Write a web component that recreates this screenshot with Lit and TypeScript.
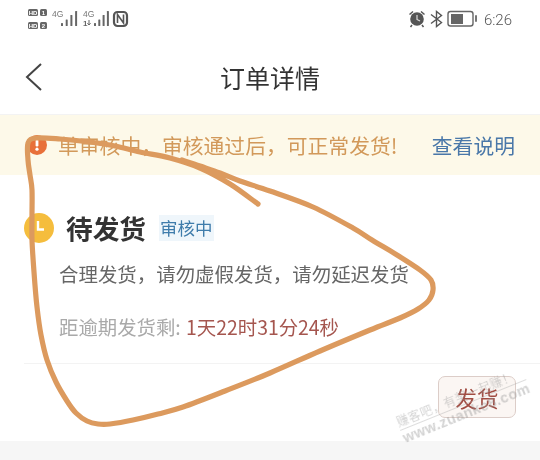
import { LitElement, html, css, svg } from "lit";
import { customElement } from "lit/decorators.js";

const bars = (x: number, step: number) => svg`
  <rect x="${x}" y="23" width="2" height="3" rx=".5"/>
  <rect x="${x + step}" y="19.5" width="2" height="6.5" rx=".5"/>
  <rect x="${x + step * 2}" y="15" width="2" height="11" rx=".5"/>
  <rect x="${x + step * 3}" y="11" width="2" height="15" rx=".5"/>`;

const inkPoints: [number, number][] = [
  [258, 204], [230, 184], [200, 168], [170, 158], [140, 152], [115, 146], [90, 142], [60, 139], [36, 138],
  [28, 143], [28, 160], [30, 175], [32, 190], [32, 215], [32, 240], [34, 272], [37, 307], [41, 335], [47, 360],
  [56, 382], [67, 401], [76, 413], [87, 421], [98, 424], [110, 424], [133, 420], [158, 414], [183, 407],
  [225, 391], [270, 373], [320, 351], [370, 330], [400, 318], [418, 309], [429, 300], [433, 290], [431, 280],
  [420, 270], [397, 255], [372, 240], [353, 228], [313, 207], [270, 191], [240, 181], [220, 173], [200, 166], [182, 160],
];

function smooth(p: [number, number][]): string {
  let d = `M${p[0][0]} ${p[0][1]}`;
  for (let i = 0; i < p.length - 1; i++) {
    const a = p[Math.max(i - 1, 0)], b = p[i], c = p[i + 1], e = p[Math.min(i + 2, p.length - 1)];
    const c1x = b[0] + (c[0] - a[0]) / 6, c1y = b[1] + (c[1] - a[1]) / 6;
    const c2x = c[0] - (e[0] - b[0]) / 6, c2y = c[1] - (e[1] - b[1]) / 6;
    d += `C${c1x.toFixed(1)} ${c1y.toFixed(1)} ${c2x.toFixed(1)} ${c2y.toFixed(1)} ${c[0]} ${c[1]}`;
  }
  return d;
}

@customElement("app-root")
export class AppRoot extends LitElement {
  static styles = css`
    :host {
      display: block;
      position: relative;
      width: 540px;
      height: 460px;
      overflow: hidden;
      background: #fff;
      font-family: "Noto Sans CJK SC", "Noto Sans", sans-serif;
    }
    .page { display: flex; flex-direction: column; height: 460px; filter: blur(0.35px); }
    .status { height: 36px; flex: none; display: flex; justify-content: space-between; align-items: flex-start; }
    .status svg { display: block; }
    .status-right { display: flex; align-items: flex-start; padding-right: 28px; gap: 7px; }
    .time { font-family: Roboto, sans-serif; font-weight: 300; font-size: 15px; line-height: 20px; margin-top: 10px; color: #555; }
    .nav {
      height: 78px; flex: none; position: relative; display: flex; align-items: center; justify-content: center;
      border-bottom: 1px solid #f3f3f3; box-sizing: content-box;
    }
    .nav h1 { margin: 3px 0 0; font-size: 25px; font-weight: 400; color: #333; line-height: 36px; }
    .back { position: absolute; left: 24px; top: 26px; }
    .banner {
      height: 60px; flex: none; background: #fdf9e9; display: flex; align-items: center;
      padding: 0 25px 0 27px; gap: 11px;
    }
    .banner .msg { flex: 1; font-size: 20.8px; color: #d2995a; white-space: nowrap; line-height: 60px; }
    .banner a { font-size: 20.8px; color: #4a78a9; white-space: nowrap; }
    .card { flex: none; height: 189px; padding-top: 35px; margin-left: 24px; border-bottom: 1px solid #f3f3f3; box-sizing: border-box; }
    .head { display: flex; align-items: center; height: 36px; }
    .head h2 { margin: 0 13px 0 12px; font-size: 26.7px; font-weight: 700; color: #333; line-height: 36px; }
    .clock { display: block; }
    .tag { background: #eff6fb; color: #3f7cab; font-size: 17.5px; line-height: 26px; padding: 0 1px; }
    .rule { margin: 14px 0 0 35px; font-size: 19.45px; line-height: 28px; color: #666; white-space: nowrap; }
    .remain { margin: 25px 0 0 35px; font-size: 19.4px; line-height: 28px; color: #a9a9a9; white-space: nowrap; }
    .remain b { font-weight: 400; color: #a5564f; margin-left: 1px; }
    .actions { flex: none; height: 77px; display: flex; justify-content: flex-end; align-items: flex-start; padding: 12px 24px 0 0; box-sizing: border-box; }
    .btn {
      width: 78px; height: 42px; box-sizing: border-box; border: 1px solid #dccdc8; border-radius: 7px;
      background: #fbf6f3; color: #a14c42; font-size: 21.5px; display: flex; align-items: center; justify-content: center;
    }
    .foot { flex: 1; background: #f6f6f6; }
    .mark {
      position: absolute; left: 400px; top: 413px; transform: rotate(-22deg); transform-origin: 0 50%;
      color: rgba(150, 150, 150, 0.42); font-size: 12px; line-height: 17px; white-space: nowrap;
      filter: blur(0.4px);
    }
    .mark .a { border-bottom: 1px solid rgba(170, 170, 170, 0.4); letter-spacing: .6px; display: block; }
    .mark .b { font-family: "Liberation Sans", sans-serif; font-weight: 700; font-size: 14.5px; letter-spacing: .5px; display: block; line-height: 16px; }
    .ink { position: absolute; left: 0; top: 0; pointer-events: none; }
  `;

  render() {
    return html`
      <div class="page">
        <div class="status">
          <svg width="140" height="36" viewBox="0 0 140 36" fill="#666">
            <rect x="28" y="9" width="10" height="7" rx="1.5"/>
            <text x="33" y="14.6" text-anchor="middle" font-size="6" font-weight="700" fill="#fff" font-family="Liberation Sans">HD</text>
            <rect x="40" y="9" width="7" height="7" rx="1.5"/>
            <text x="43.5" y="14.6" text-anchor="middle" font-size="6" font-weight="700" fill="#fff" font-family="Liberation Sans">1</text>
            <rect x="28" y="22" width="10" height="7" rx="1.5"/>
            <text x="33" y="27.6" text-anchor="middle" font-size="6" font-weight="700" fill="#fff" font-family="Liberation Sans">HD</text>
            <rect x="40" y="22" width="7" height="7" rx="1.5"/>
            <text x="43.5" y="27.6" text-anchor="middle" font-size="6" font-weight="700" fill="#fff" font-family="Liberation Sans">2</text>
            <text x="52" y="17" font-size="8.5" font-family="Liberation Sans" fill="#777">4G</text>
            ${bars(61, 4.7)}
            <text x="83" y="17" font-size="8.5" font-family="Liberation Sans" fill="#777">4G</text>
            <text x="83" y="26" font-size="8" font-weight="700" font-family="Liberation Sans" fill="#666">1</text>
            <path d="M89 20v5m-1.6-1.8 1.6 1.8 1.6-1.8" fill="none" stroke="#666"/>
            ${bars(94, 4.3)}
            <rect x="114" y="12" width="13" height="14" rx="3.5" fill="none" stroke="#555" stroke-width="2.2"/>
            <path d="M117.5 23v-8.5l6 8.5v-8.5" fill="none" stroke="#555" stroke-width="1.6"/>
          </svg>
          <div class="status-right">
            <svg width="69" height="36" viewBox="0 0 69 36">
              <circle cx="9" cy="19" r="6.8" fill="#555"/>
              <path d="M9 15v4.5l3 1.5" fill="none" stroke="#ddd" stroke-width="1.2"/>
              <path d="M1.5 14.5 5 11.5M16.5 14.5 13 11.5M4 25l-1.5 2M14 25l1.5 2" stroke="#555" stroke-width="1.5" fill="none"/>
              <path d="M23 14.5 33.5 22.5 28.5 26.5V11.5l5 4L23 23.5" fill="none" stroke="#555" stroke-width="1.4"/>
              <rect x="40" y="11.5" width="25" height="14.5" rx="2.5" fill="none" stroke="#666" stroke-width="1.4"/>
              <rect x="43" y="14" width="12" height="10" fill="#666"/>
              <rect x="67" y="15" width="2" height="7" rx="1" fill="#777"/>
            </svg>
            <span class="time">6:26</span>
          </div>
        </div>
        <div class="nav">
          <svg class="back" width="20" height="30" viewBox="0 0 20 30">
            <path d="M17 2 3 15l14 13" fill="none" stroke="#444" stroke-width="2"/>
          </svg>
          <h1>订单详情</h1>
        </div>
        <div class="banner">
          <svg width="20" height="20" viewBox="0 0 20 20">
            <circle cx="10" cy="10" r="10" fill="#e8703a"/>
            <rect x="8.6" y="4.5" width="2.8" height="7" rx="1.2" fill="#fff"/>
            <circle cx="10" cy="14.2" r="1.6" fill="#fff"/>
          </svg>
          <span class="msg">单审核中，审核通过后，可正常发货!</span>
          <a>查看说明</a>
        </div>
        <div class="card">
          <div class="head">
            <svg class="clock" width="30" height="30" viewBox="0 0 30 30">
              <circle cx="15" cy="15" r="15" fill="#f5bd3d"/>
              <path d="M14 8v8.5h6" fill="none" stroke="#fff" stroke-width="2.4"/>
            </svg>
            <h2>待发货</h2>
            <span class="tag">审核中</span>
          </div>
          <p class="rule">合理发货，请勿虚假发货，请勿延迟发货</p>
          <p class="remain">距逾期发货剩: <b>1天22时31分24秒</b></p>
        </div>
        <div class="actions"><div class="btn">发货</div></div>
        <div class="foot"></div>
      </div>
      <div class="mark"><span class="a">赚客吧，有奖一起赚！</span><span class="b">www.zuanke8.com</span></div>
      <svg class="ink" width="540" height="460" viewBox="0 0 540 460">
        <path d="${smooth(inkPoints)}" fill="none" stroke="#dc9a5e" stroke-width="5.2" stroke-linecap="round" stroke-linejoin="round"/>
      </svg>
    `;
  }
}
